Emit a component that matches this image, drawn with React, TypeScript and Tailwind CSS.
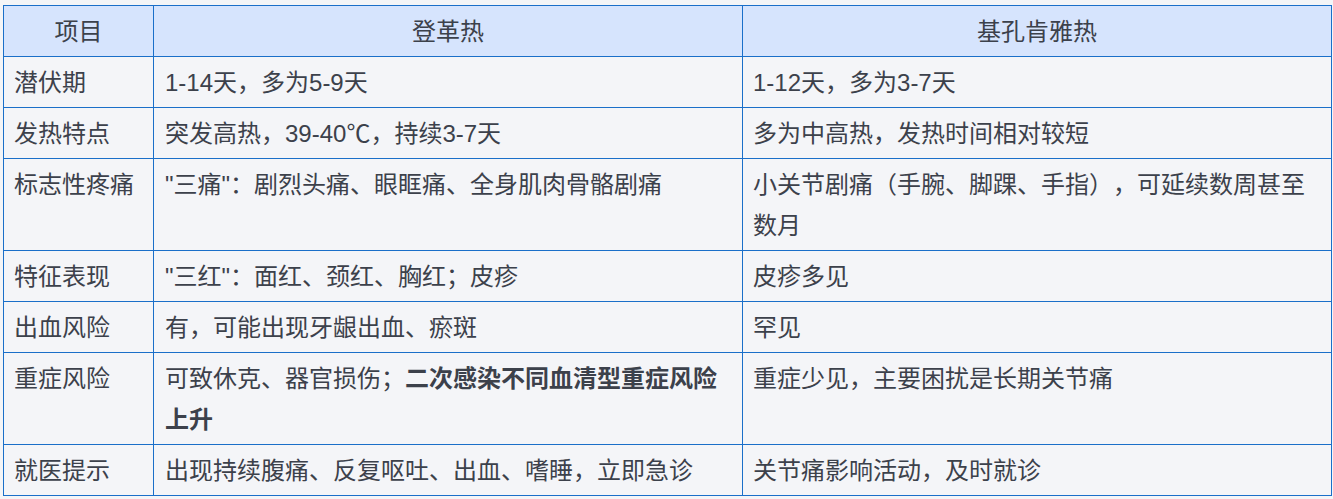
const rows: { label: string; dengue: React.ReactNode; chik: string }[] = [
  { label: '潜伏期', dengue: '1-14天，多为5-9天', chik: '1-12天，多为3-7天' },
  { label: '发热特点', dengue: '突发高热，39-40℃，持续3-7天', chik: '多为中高热，发热时间相对较短' },
  {
    label: '标志性疼痛',
    dengue: '"三痛"：剧烈头痛、眼眶痛、全身肌肉骨骼剧痛',
    chik: '小关节剧痛（手腕、脚踝、手指），可延续数周甚至数月',
  },
  { label: '特征表现', dengue: '"三红"：面红、颈红、胸红；皮疹', chik: '皮疹多见' },
  { label: '出血风险', dengue: '有，可能出现牙龈出血、瘀斑', chik: '罕见' },
  {
    label: '重症风险',
    dengue: (
      <>
        可致休克、器官损伤；<strong className="font-bold">二次感染不同血清型重症风险上升</strong>
      </>
    ),
    chik: '重症少见，主要困扰是长期关节痛',
  },
  { label: '就医提示', dengue: '出现持续腹痛、反复呕吐、出血、嗜睡，立即急诊', chik: '关节痛影响活动，及时就诊' },
];

export default function App() {
  return (
    <div
      className="min-h-[499px] w-full bg-[#f4f5f7] pt-[5px] pl-[3px] text-[#3c414b] [text-spacing-trim:space-all]"
      style={{ fontFamily: '"Liberation Sans", "Noto Sans CJK SC", sans-serif' }}
    >
      <table className="w-[1328px] table-fixed border-collapse text-[24px] leading-[41px]">
        <colgroup>
          <col className="w-[150px]" />
          <col className="w-[589px]" />
          <col className="w-[589px]" />
        </colgroup>
        <thead>
          <tr className="bg-[#d6e4fd]">
            <th className="border border-[#1a6fc9] px-[10px] py-[4.5px] text-center font-normal">项目</th>
            <th className="border border-[#1a6fc9] px-[10px] py-[4.5px] text-center font-normal">登革热</th>
            <th className="border border-[#1a6fc9] px-[10px] py-[4.5px] text-center font-normal">基孔肯雅热</th>
          </tr>
        </thead>
        <tbody>
          {rows.map((r) => (
            <tr key={r.label} className="bg-[#f4f5f8] align-top">
              <td className="border border-[#1a6fc9] px-[10px] py-[4.5px]">{r.label}</td>
              <td className="border border-[#1a6fc9] px-[11px] py-[4.5px]">{r.dengue}</td>
              <td className="border border-[#1a6fc9] px-[10px] py-[4.5px]">{r.chik}</td>
            </tr>
          ))}
        </tbody>
      </table>
    </div>
  );
}
